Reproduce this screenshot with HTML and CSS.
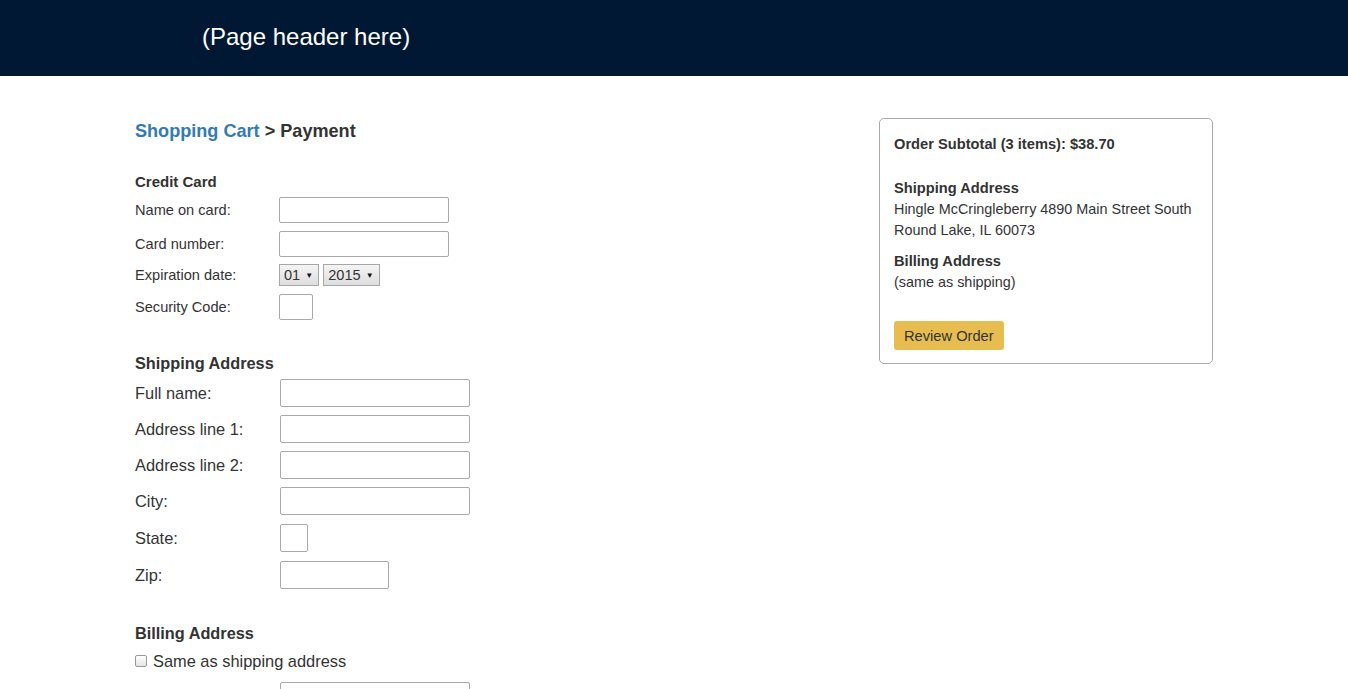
FILE: index.html
```html
<!DOCTYPE html>
<html>
<head>
<meta charset="utf-8">
<link rel="stylesheet" href="styles.css">
</head>
<body>
<header class="site-header">
  <div class="header-title">(Page header here)</div>
</header>
<main class="page">
  <section class="checkout">
    <h2 class="crumbs"><a href="#" class="crumb-link">Shopping Cart</a> &gt; Payment</h2>

    <div class="section small">
      <h3 class="section-title">Credit Card</h3>
      <div class="row"><label class="lbl">Name on card:</label><input class="field w170" type="text"></div>
      <div class="row r33"><label class="lbl">Card number:</label><input class="field w170" type="text"></div>
      <div class="row sel-row"><label class="lbl">Expiration date:</label>
        <span class="sel">01<span class="arrow">▼</span></span>
        <span class="sel">2015<span class="arrow">▼</span></span>
      </div>
      <div class="row"><label class="lbl">Security Code:</label><input class="field w34" type="text"></div>
    </div>

    <div class="section large shipping">
      <h3 class="section-title">Shipping Address</h3>
      <div class="row"><label class="lbl">Full name:</label><input class="field w190" type="text"></div>
      <div class="row"><label class="lbl">Address line 1:</label><input class="field w190" type="text"></div>
      <div class="row"><label class="lbl">Address line 2:</label><input class="field w190" type="text"></div>
      <div class="row r37"><label class="lbl">City:</label><input class="field w190" type="text"></div>
      <div class="row r37"><label class="lbl">State:</label><input class="field w28" type="text"></div>
      <div class="row"><label class="lbl">Zip:</label><input class="field w109" type="text"></div>
    </div>

    <div class="section large billing">
      <h3 class="section-title">Billing Address</h3>
      <label class="check"><span class="box"></span>Same as shipping address</label>
      <div class="row"><span class="lbl"></span><input class="field w190" type="text"></div>
    </div>
  </section>

  <aside class="summary">
    <div class="sum-total">Order Subtotal (3 items): $38.70</div>
    <div class="sum-block">
      <div class="sum-head">Shipping Address</div>
      <div class="sum-text">Hingle McCringleberry 4890 Main Street South<br>Round Lake, IL 60073</div>
    </div>
    <div class="sum-block">
      <div class="sum-head">Billing Address</div>
      <div class="sum-text">(same as shipping)</div>
    </div>
    <button class="review-btn">Review Order</button>
  </aside>
</main>
</body>
</html>
```

FILE: styles.css
```css
* { box-sizing: border-box; }
html, body { margin: 0; padding: 0; }
body {
  font-family: "Liberation Sans", Arial, sans-serif;
  color: #333;
  background: #fff;
  overflow: hidden;
  height: 689px;
}
.site-header {
  background: #011835;
  height: 76px;
  display: flex;
  align-items: center;
  padding-left: 202px;
}
.header-title {
  color: #fff;
  font-size: 24px;
  line-height: 28px;
  margin-top: -3px;
}
.page {
  display: flex;
  justify-content: space-between;
  align-items: flex-start;
  padding: 42px 135px 0 135px;
}
.checkout { width: 500px; }
.crumbs {
  margin: 2px 0 0 0;
  font-size: 18.1px;
  line-height: 22px;
  font-weight: bold;
  color: #333;
}
.crumb-link { color: #337ab7; text-decoration: none; }

.section-title {
  margin: 0;
  font-weight: bold;
}
.small { margin-top: 31px; }
.small .section-title { font-size: 15px; line-height: 18px; margin-bottom: 6px; }
.small .row { height: 34px; }
.small .r33 { height: 33px; }
.small .sel-row { height: 30px; }
.small .sel-row .lbl { line-height: 22px; height: 22px; }
.small .lbl { font-size: 14.6px; }

.large .section-title { font-size: 16.3px; line-height: 20px; margin-bottom: 6px; }
.large .row { height: 36px; }
.large .r37 { height: 37px; }
.large .lbl { font-size: 16.4px; }
.shipping { margin-top: 25px; }
.billing { margin-top: 26px; }

.row {
  display: flex;
  align-items: flex-start;
}
.lbl {
  width: 144px;
  flex: none;
  line-height: 26px;
}
.large .lbl { width: 145px; line-height: 28px; }
.field {
  border: 1px solid #a9a9a9;
  border-radius: 2px;
  background: #fff;
  font: inherit;
  padding: 0 3px;
  margin: 0;
}
.small .field { height: 26px; }
.large .field { height: 28px; }
.w170 { width: 170px; }
.w34 { width: 34px; }
.w190 { width: 190px; }
.w28 { width: 28px; }
.w109 { width: 109px; }

.sel {
  display: inline-flex;
  align-items: center;
  height: 22px;
  border: 1px solid #a6a6a6;
  background: linear-gradient(#f4f4f4, #dedede);
  font-size: 14.6px;
  padding: 0 5px 0 4px;
  margin-right: 4px;
  color: #333;
}
.arrow {
  font-size: 8px;
  margin-left: 5px;
  color: #111;
}

.check {
  display: flex;
  align-items: center;
  font-size: 16.4px;
  line-height: 20px;
  height: 20px;
  margin-top: 8px;
  margin-bottom: 11px;
}
.box {
  width: 12px;
  height: 12px;
  border: 1px solid #999;
  border-radius: 2px;
  background: linear-gradient(#fff, #e4e4e4);
  margin-right: 6px;
  margin-top: -1px;
}

.summary {
  width: 334px;
  height: 246px;
  border: 1px solid #aaa;
  border-radius: 5px;
  padding: 16px 14px 13px 14px;
  font-size: 14.4px;
  line-height: 21px;
}
.sum-total { font-weight: bold; font-size: 14.667px; line-height: 19px; margin-bottom: 24px; }
.sum-block { margin-bottom: 10px; }
.sum-head { font-weight: bold; font-size: 14.667px; }
.review-btn {
  margin-top: 18px;
  background: #e8bd50;
  border: none;
  border-radius: 3px;
  color: #333;
  font-family: inherit;
  font-size: 14.667px;
  height: 29px;
  padding: 0 10px;
}
```
